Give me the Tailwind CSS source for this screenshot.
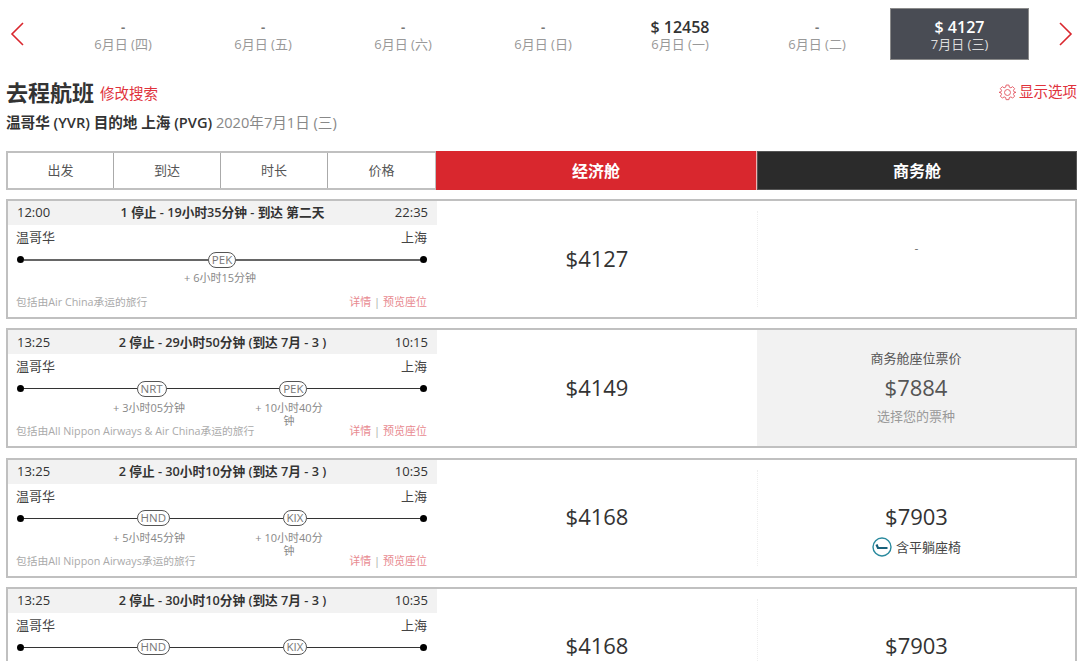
<!DOCTYPE html>
<html lang="zh-CN">
<head>
  <meta charset="UTF-8" />
  <title>去程航班</title>
  <script src="https://cdn.jsdelivr.net/npm/@tailwindcss/browser@4"></script>
</head>
<body class="bg-white text-[#333] font-['Open_Sans','Noto_Sans_CJK_SC',sans-serif]">
<div class="w-[1080px] h-[661px] overflow-hidden">

  <!-- Date strip -->
  <div class="flex items-center h-[52px] mt-[8px]">
    <svg class="ml-[10px] w-[15px] h-[24px]" viewBox="0 0 15 24" fill="none" stroke="#d9272e" stroke-width="1.6"><path d="M13 1 L2 12 L13 23" /></svg>
    <div class="ml-[28px] flex h-[52px]">
      <div class="w-[140px] pt-[11px] flex flex-col items-center text-[13px] leading-[16px] text-[#999]"><span class="h-[17px] leading-[17px] font-bold text-[#777]">-</span>6月日 (四)</div>
      <div class="w-[140px] pt-[11px] flex flex-col items-center text-[13px] leading-[16px] text-[#999]"><span class="h-[17px] leading-[17px] font-bold text-[#777]">-</span>6月日 (五)</div>
      <div class="w-[140px] pt-[11px] flex flex-col items-center text-[13px] leading-[16px] text-[#999]"><span class="h-[17px] leading-[17px] font-bold text-[#777]">-</span>6月日 (六)</div>
      <div class="w-[140px] pt-[11px] flex flex-col items-center text-[13px] leading-[16px] text-[#999]"><span class="h-[17px] leading-[17px] font-bold text-[#777]">-</span>6月日 (日)</div>
      <div class="w-[134px] pt-[11px] flex flex-col items-center text-[13px] leading-[16px] text-[#999]"><span class="h-[17px] leading-[17px] text-[16px] font-semibold text-[#333]">$ 12458</span>6月日 (一)</div>
      <div class="w-[140px] pt-[11px] flex flex-col items-center text-[13px] leading-[16px] text-[#999]"><span class="h-[17px] leading-[17px] font-bold text-[#777]">-</span>6月日 (二)</div>
      <div class="w-[139px] ml-[3px] pt-[10px] flex flex-col items-center bg-[#494c54] border border-[#8a8a8a] text-[13px] leading-[16px] text-[#ddd]"><span class="h-[17px] leading-[17px] text-[16px] font-semibold text-white">$ 4127</span>7月日 (三)</div>
    </div>
    <svg class="ml-[29px] w-[15px] h-[24px]" viewBox="0 0 15 24" fill="none" stroke="#d9272e" stroke-width="1.6"><path d="M2 1 L13 12 L2 23" /></svg>
  </div>

  <!-- Title -->
  <div class="flex justify-between pl-[6px] pr-[3px] mt-[16px]">
    <div class="flex items-center h-[32px]">
      <h1 class="text-[22px] leading-[32px] font-bold text-[#333]">去程航班</h1>
      <a class="ml-[6px] text-[14.5px] leading-[20px] mt-[4px] text-[#e0323c]">修改搜索</a>
    </div>
    <a class="flex items-center h-[32px] text-[14.5px] text-[#e0323c]">
      <svg class="w-[17px] h-[17px] mr-[3px]" viewBox="0 0 24 24" fill="none" stroke="#e4606a" stroke-width="1.4"><circle cx="12" cy="12" r="4.2" /><path d="M10 1.5h4l.6 3 2.2.9 2.5-1.7 2.8 2.8-1.7 2.5.9 2.2 3 .6v0l-3 .6-.9 2.2 1.7 2.5-2.8 2.8-2.5-1.7-2.2.9-.6 3h-4l-.6-3-2.2-.9-2.5 1.7-2.8-2.8 1.7-2.5-.9-2.2-3-.6v0l3-.6.9-2.2-1.7-2.5 2.8-2.8 2.5 1.7 2.2-.9z" /></svg>
      显示选项
    </a>
  </div>
  <p class="pl-[6px] mt-[4px] text-[14.6px] leading-[20px] text-[#888]"><span class="font-semibold text-[#333]">温哥华 (YVR) 目的地 上海 (PVG)</span> 2020年7月1日 (三)</p>

  <!-- Sort / cabin header -->
  <div class="flex ml-[6px] w-[1071px] h-[39px] mt-[19px] text-[13px]">
    <div class="flex w-[430px] border-2 border-[#c0c0c0] border-r-0">
      <div class="w-[106px] flex items-center justify-center border-r border-[#aaa] text-[#555]">出发</div>
      <div class="w-[107px] flex items-center justify-center border-r border-[#aaa] text-[#555]">到达</div>
      <div class="w-[107px] flex items-center justify-center border-r border-[#aaa] text-[#555]">时长</div>
      <div class="w-[108px] flex items-center justify-center border-r border-[#c0c0c0] text-[#555]">价格</div>
    </div>
    <div class="w-[321px] flex items-center justify-center bg-[#d9272e] border-r border-[#f0b0b0] text-[16px] font-bold text-white">经济舱</div>
    <div class="flex-1 flex items-center justify-center bg-[#2b2b2b] border border-[#555] text-[16px] font-bold text-white">商务舱</div>
  </div>

  <!-- Flights -->
  <div class="flex flex-col gap-[9.33px] ml-[6px] w-[1071px] mt-[9px]">

    <div class="flex h-[120px] shrink-0 border-2 border-[#c0c0c0]">
      <div class="w-[429px] shrink-0 flex flex-col">
        <div class="flex items-center justify-between h-[24px] bg-[#f2f2f2] px-[9px] text-[13px] font-semibold"><span class="font-normal">12:00</span><span class="text-[12.7px]">1 停止 - 19小时35分钟 - 到达 第二天</span><span class="font-normal">22:35</span></div>
        <div class="flex justify-between pl-[8px] pr-[10px] pt-[3px] h-[26px] text-[13px] leading-[18px] text-[#444]"><span>温哥华</span><span>上海</span></div>
        <div class="flex items-center h-[17px] pl-[9px] pr-[10px]">
          <i class="w-[7px] h-[7px] rounded-full bg-black"></i><i class="flex-1 h-[2px] bg-[#666]"></i>
          <span class="px-[3px] h-[16px] leading-[13px] rounded-full border-[1.5px] border-[#555] text-[11.5px] text-[#777]">PEK</span>
          <i class="flex-1 h-[2px] bg-[#666]"></i><i class="w-[7px] h-[7px] rounded-full bg-black"></i>
        </div>
        <div class="flex justify-center h-[27px] pt-[3px] pr-[5px] text-[11px] leading-[13px] text-[#888]"><span>+ 6小时15分钟</span></div>
        <div class="flex justify-between pl-[8px] pr-[10px] text-[10.75px] leading-[14px] text-[#aaa]"><span>包括由Air China承运的旅行</span><span class="text-[11px] text-[#e88a90]">详情 <span class="text-[#aaa]">|</span> 预览座位</span></div>
      </div>
      <div class="w-[320px] shrink-0 flex items-center justify-center text-[22px] pb-[2px]">$4127</div>
      <div class="flex-1 flex items-start justify-center my-[10px] border-l border-dotted border-[#eee] pt-[29px] text-[12px] text-[#777]">-</div>
    </div>

    <div class="flex h-[120px] shrink-0 border-2 border-[#c0c0c0]">
      <div class="w-[429px] shrink-0 flex flex-col">
        <div class="flex items-center justify-between h-[24px] bg-[#f2f2f2] px-[9px] text-[13px] font-semibold"><span class="font-normal">13:25</span><span class="text-[12.7px]">2 停止 - 29小时50分钟 (到达 7月 - 3 )</span><span class="font-normal">10:15</span></div>
        <div class="flex justify-between pl-[8px] pr-[10px] pt-[3px] h-[26px] text-[13px] leading-[18px] text-[#444]"><span>温哥华</span><span>上海</span></div>
        <div class="flex items-center h-[17px] pl-[9px] pr-[10px]">
          <i class="w-[7px] h-[7px] rounded-full bg-black"></i><i class="flex-1 h-px bg-[#333]"></i>
          <span class="px-[3px] h-[16px] leading-[13px] rounded-full border-[1.5px] border-[#555] text-[11.5px] text-[#777]">NRT</span>
          <i class="flex-1 h-px bg-[#333]"></i>
          <span class="px-[3px] h-[16px] leading-[13px] rounded-full border-[1.5px] border-[#555] text-[11.5px] text-[#777]">PEK</span>
          <i class="flex-1 h-px bg-[#333]"></i><i class="w-[7px] h-[7px] rounded-full bg-black"></i>
        </div>
        <div class="flex h-[27px] pt-[4px] text-[11px] leading-[13px] text-[#888] text-center"><span class="w-[76px] ml-[103px]">+ 3小时05分钟</span><span class="w-[72px] ml-[66px]">+ 10小时40分钟</span></div>
        <div class="flex justify-between pl-[8px] pr-[10px] text-[10.75px] leading-[14px] text-[#aaa]"><span>包括由All Nippon Airways &amp; Air China承运的旅行</span><span class="text-[11px] text-[#e88a90]">详情 <span class="text-[#aaa]">|</span> 预览座位</span></div>
      </div>
      <div class="w-[320px] shrink-0 flex items-center justify-center text-[22px] pb-[2px]">$4149</div>
      <div class="flex-1 flex flex-col items-center bg-[#f2f2f2] pt-[20px]">
        <span class="text-[13px] leading-[16px] text-[#555]">商务舱座位票价</span>
        <span class="text-[22px] leading-[30px] mt-[6px] text-[#555]">$7884</span>
        <span class="text-[13px] leading-[18px] mt-[5px] text-[#999]">选择您的票种</span>
      </div>
    </div>

    <div class="flex h-[120px] shrink-0 border-2 border-[#c0c0c0]">
      <div class="w-[429px] shrink-0 flex flex-col">
        <div class="flex items-center justify-between h-[24px] bg-[#f2f2f2] px-[9px] text-[13px] font-semibold"><span class="font-normal">13:25</span><span class="text-[12.7px]">2 停止 - 30小时10分钟 (到达 7月 - 3 )</span><span class="font-normal">10:35</span></div>
        <div class="flex justify-between pl-[8px] pr-[10px] pt-[3px] h-[26px] text-[13px] leading-[18px] text-[#444]"><span>温哥华</span><span>上海</span></div>
        <div class="flex items-center h-[17px] pl-[9px] pr-[10px]">
          <i class="w-[7px] h-[7px] rounded-full bg-black"></i><i class="flex-1 h-px bg-[#333]"></i>
          <span class="px-[3px] h-[16px] leading-[13px] rounded-full border-[1.5px] border-[#555] text-[11.5px] text-[#777]">HND</span>
          <i class="flex-1 h-px bg-[#333]"></i>
          <span class="px-[3px] h-[16px] leading-[13px] rounded-full border-[1.5px] border-[#555] text-[11.5px] text-[#777]">KIX</span>
          <i class="flex-1 h-px bg-[#333]"></i><i class="w-[7px] h-[7px] rounded-full bg-black"></i>
        </div>
        <div class="flex h-[27px] pt-[4px] text-[11px] leading-[13px] text-[#888] text-center"><span class="w-[76px] ml-[103px]">+ 5小时45分钟</span><span class="w-[72px] ml-[66px]">+ 10小时40分钟</span></div>
        <div class="flex justify-between pl-[8px] pr-[10px] text-[10.75px] leading-[14px] text-[#aaa]"><span>包括由All Nippon Airways承运的旅行</span><span class="text-[11px] text-[#e88a90]">详情 <span class="text-[#aaa]">|</span> 预览座位</span></div>
      </div>
      <div class="w-[320px] shrink-0 flex items-center justify-center text-[22px] pb-[2px]">$4168</div>
      <div class="flex-1 flex flex-col items-center my-[10px] border-l border-dotted border-[#eee] pt-[31px]">
        <span class="text-[22px] leading-[30px]">$7903</span>
        <span class="flex items-center text-[13px] leading-[20px] mt-[6px] text-[#444]">
          <svg class="w-[20px] h-[20px] mr-[4px]" viewBox="0 0 20 20" fill="none"><circle cx="10" cy="10" r="9" stroke="#2a8a9e" stroke-width="1.4" /><path d="M4.5 7.5 L6 11 H15.5" stroke="#17607a" stroke-width="2.2" /></svg>
          含平躺座椅
        </span>
      </div>
    </div>

    <div class="flex h-[120px] shrink-0 border-2 border-[#c0c0c0]">
      <div class="w-[429px] shrink-0 flex flex-col">
        <div class="flex items-center justify-between h-[24px] bg-[#f2f2f2] px-[9px] text-[13px] font-semibold"><span class="font-normal">13:25</span><span class="text-[12.7px]">2 停止 - 30小时10分钟 (到达 7月 - 3 )</span><span class="font-normal">10:35</span></div>
        <div class="flex justify-between pl-[8px] pr-[10px] pt-[3px] h-[26px] text-[13px] leading-[18px] text-[#444]"><span>温哥华</span><span>上海</span></div>
        <div class="flex items-center h-[17px] pl-[9px] pr-[10px]">
          <i class="w-[7px] h-[7px] rounded-full bg-black"></i><i class="flex-1 h-px bg-[#333]"></i>
          <span class="px-[3px] h-[16px] leading-[13px] rounded-full border-[1.5px] border-[#555] text-[11.5px] text-[#777]">HND</span>
          <i class="flex-1 h-px bg-[#333]"></i>
          <span class="px-[3px] h-[16px] leading-[13px] rounded-full border-[1.5px] border-[#555] text-[11.5px] text-[#777]">KIX</span>
          <i class="flex-1 h-px bg-[#333]"></i><i class="w-[7px] h-[7px] rounded-full bg-black"></i>
        </div>
      </div>
      <div class="w-[320px] shrink-0 flex items-center justify-center text-[22px] pb-[2px]">$4168</div>
      <div class="flex-1 flex flex-col items-center my-[10px] border-l border-dotted border-[#eee] pt-[31px]">
        <span class="text-[22px] leading-[30px]">$7903</span>
      </div>
    </div>

  </div>
</div>
</body>
</html>
